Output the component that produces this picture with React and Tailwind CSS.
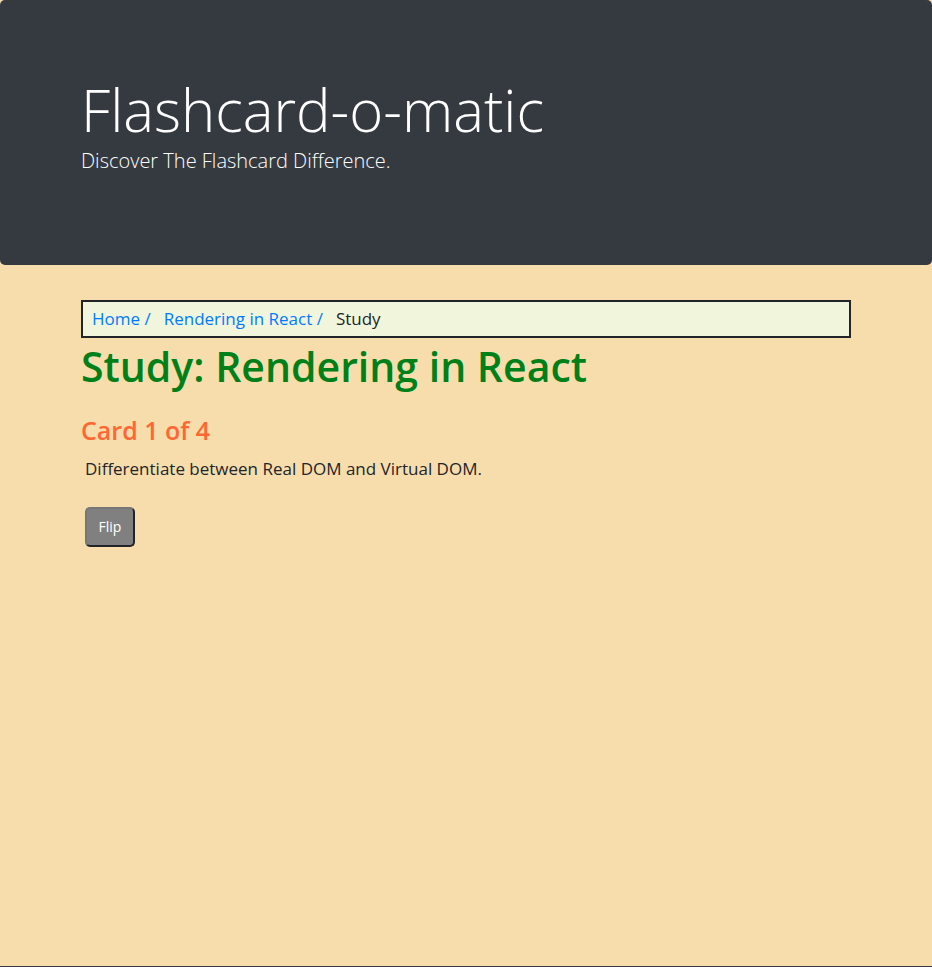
export default function App() {
  return (
    <div className="min-h-screen border-b border-[#343a40] bg-[#f8ddac] font-['Open_Sans','Noto_Sans',sans-serif] text-[17px] text-[#212529]">
      <header className="rounded-[5px] bg-[#343a40] px-4 pt-20 pb-[84px] text-white">
        <div className="mx-auto max-w-[802px] px-4">
          <h1 className="text-[58px] leading-[60px] font-light">Flashcard-o-matic</h1>
          <p className="text-xl leading-[41px] font-light">Discover The Flashcard Difference.</p>
        </div>
      </header>
      <main className="mx-auto mt-[35px] max-w-[802px] px-4">
        <nav aria-label="Breadcrumb" className="flex items-center gap-[13px] border-2 border-[#212529] bg-[#f0f5dc] px-[9px] py-1 leading-[26px]">
          <a href="#home" className="text-[#007bff]">Home /</a>
          <a href="#deck" className="text-[#007bff]">Rendering in React /</a>
          <span aria-current="page">Study</span>
        </nav>
        <h2 className="text-[41px] leading-[56px] font-semibold text-[#008018]">Study: Rendering in React</h2>
        <h3 className="mt-[18px] text-[25px] leading-9 font-semibold text-[#ff6633]">Card 1 of 4</h3>
        <p className="mt-[9px] px-1 leading-6">Differentiate between Real DOM and Virtual DOM.</p>
        <button type="button" className="mt-[26px] ml-1 h-10 w-[50px] rounded-[5px] border-2 border-t-[#767676] border-r-[#212529] border-b-[#212529] border-l-[#767676] bg-[#808080] text-sm text-white">Flip</button>
      </main>
    </div>
  );
}
